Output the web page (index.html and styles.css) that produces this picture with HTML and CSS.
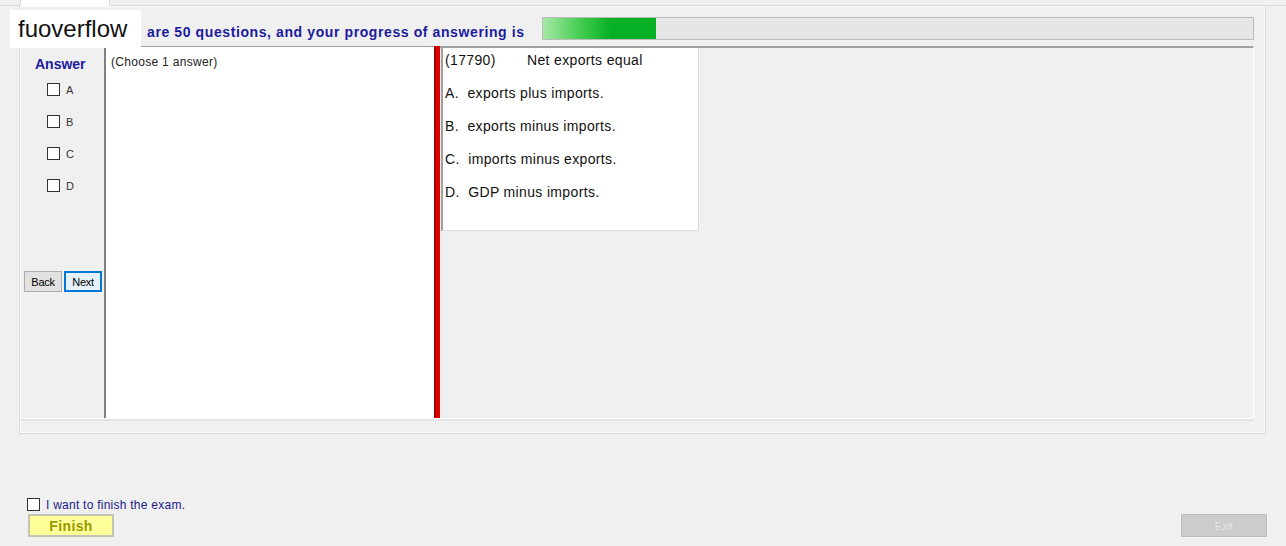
FILE: index.html
```html
<!DOCTYPE html>
<html lang="en">
<head>
    <meta charset="UTF-8">
    <meta name="viewport" content="width=device-width, initial-scale=1.0">
    <title>Exam</title>
    <link rel="stylesheet" href="styles.css">
</head>
<body>
    <div class="tabstrip">
        <div class="tab"></div>
    </div>
    <div class="panel">
        <div class="header">
            <div class="title">are 50 questions, and your progress of answering is</div>
            <div class="progress">
                <div class="progress-fill" style="width: 113px"></div>
            </div>
        </div>
        <div class="main">
            <div class="answer-col">
                <div class="answer-title">Answer</div>
                <div class="options">
                    <div class="option"><span class="box"></span><span>A</span></div>
                    <div class="option"><span class="box"></span><span>B</span></div>
                    <div class="option"><span class="box"></span><span>C</span></div>
                    <div class="option"><span class="box"></span><span>D</span></div>
                </div>
                <div class="nav">
                    <button class="nav-btn">Back</button>
                    <button class="nav-btn focused">Next</button>
                </div>
            </div>
            <div class="text-panel">(Choose 1 answer)</div>
            <div class="splitter"></div>
            <div class="question-area">
                <div class="question">
                    <p><span class="qid">(17790)</span>Net exports equal</p>
                    <p>A.&nbsp; exports plus imports.</p>
                    <p>B.&nbsp; exports minus imports.</p>
                    <p>C.&nbsp; imports minus exports.</p>
                    <p>D.&nbsp; GDP minus imports.</p>
                </div>
            </div>
        </div>
    </div>
    <div class="footer">
        <div class="finish-check"><span class="box"></span><span class="finish-label">I want to finish the exam.</span></div>
        <div class="buttons">
            <button class="finish-btn">Finish</button>
            <button class="exit-btn">Exit</button>
        </div>
    </div>
    <div class="watermark">fuoverflow</div>
</body>
</html>
```

FILE: styles.css
```css
body {
    font-family: "Liberation Sans", Arial, sans-serif;
    background-color: #f0f0f0;
    margin: 0;
    padding: 0;
    width: 1286px;
    height: 546px;
    overflow: hidden;
    position: relative;
}

.tabstrip {
    height: 5px;
    padding-left: 20px;
    border-bottom: 1px solid #dcdcdc;
}

.tab {
    width: 90px;
    height: 6px;
    background-color: #fff;
    border: 1px solid #d9d9d9;
    border-top: none;
    border-bottom: none;
    box-sizing: border-box;
}

.panel {
    margin-left: 19px;
    width: 1247px;
    height: 428px;
    box-sizing: border-box;
    border: 1px solid #dadada;
    border-top: none;
    box-shadow: inset 0 0 0 1px #fafafa;
    padding: 0 11px 0 2px;
}

.header {
    display: flex;
    height: 39px;
    box-sizing: border-box;
    padding-top: 11px;
}

.title {
    flex: 1;
    padding: 7px 0 0 125px;
    font-size: 14px;
    font-weight: bold;
    line-height: 16px;
    letter-spacing: 0.6px;
    color: #1b1b9e;
    white-space: nowrap;
}

.progress {
    width: 712px;
    height: 23px;
    box-sizing: border-box;
    background-color: #e6e6e6;
    border: 1px solid #bcbcbc;
}

.progress-fill {
    height: 100%;
    background: linear-gradient(to right, #a4e8a6 0, #3fcb4c 35%, #06b025 60%, #06b025 100%);
}

.main {
    display: flex;
    height: 373px;
    border-bottom: 1px solid #fff;
    box-shadow: 0 2px 0 #e3e3e3;
}

.answer-col {
    width: 82px;
    padding-top: 11px;
    box-sizing: border-box;
}

.answer-title {
    padding-left: 13px;
    font-size: 14px;
    font-weight: bold;
    line-height: 16px;
    color: #1b1b9e;
}

.options {
    margin-top: 11px;
    padding-left: 25px;
    display: flex;
    flex-direction: column;
    gap: 19px;
}

.option {
    display: flex;
    align-items: center;
    gap: 6px;
    height: 13px;
    font-size: 11px;
    color: #333;
}

.box {
    display: inline-block;
    width: 13px;
    height: 13px;
    box-sizing: border-box;
    border: 1px solid #333;
    background-color: #fff;
}

.nav {
    margin-top: 79px;
    padding-left: 2px;
    display: flex;
    gap: 2px;
}

.nav-btn {
    width: 38px;
    height: 21px;
    padding: 0;
    font-family: "Liberation Sans", Arial, sans-serif;
    font-size: 11px;
    color: #000;
    background-color: #e1e1e1;
    border: 1px solid #adadad;
    letter-spacing: -0.3px;
}

.nav-btn.focused {
    background-color: #e5f1fb;
    border: 2px solid #0078d7;
}

.text-panel {
    width: 330px;
    box-sizing: border-box;
    margin-top: 1px;
    background-color: #fff;
    border-top: 1px solid #a0a0a0;
    border-left: 2px solid #808080;
    padding: 7px 0 0 5px;
    font-size: 12px;
    line-height: 16px;
    letter-spacing: 0.3px;
    color: #222;
}

.splitter {
    width: 6px;
    margin-top: 1px;
    box-sizing: border-box;
    background-color: #dd0000;
    border-left: 2px solid #a40000;
}

.question-area {
    flex: 1;
    margin-top: 1px;
    border-top: 2px solid #a0a0a0;
    border-right: 1px solid #fff;
    padding-left: 1px;
}

.question {
    width: 258px;
    box-sizing: border-box;
    background-color: #fff;
    border-left: 2px solid #a0a0a0;
    border-right: 1px solid #dcdcdc;
    border-bottom: 1px solid #dcdcdc;
    padding: 1px 0 27px 2px;
    font-size: 14px;
    letter-spacing: 0.35px;
    color: #111;
}

.question p {
    margin: 0 0 11px;
    line-height: 22px;
}

.question p:last-child {
    margin-bottom: 0;
}

.qid {
    display: inline-block;
    width: 82px;
}

.footer {
    padding: 63px 0 0 27px;
}

.finish-check {
    display: flex;
    align-items: center;
    gap: 6px;
    height: 14px;
    font-size: 12px;
    color: #1a1a8a;
    letter-spacing: 0.25px;
}

.finish-label {
    padding-top: 2px;
}

.buttons {
    margin-top: 3px;
    display: flex;
    justify-content: space-between;
    width: 1240px;
}

.finish-btn {
    margin-left: 1px;
    width: 86px;
    height: 23px;
    padding: 0;
    background-color: #ffff99;
    border: 2px solid #c4c4b4;
    font-family: "Liberation Sans", Arial, sans-serif;
    font-size: 14px;
    font-weight: bold;
    letter-spacing: 0.4px;
    color: #999900;
}

.exit-btn {
    width: 86px;
    height: 23px;
    padding: 0;
    background-color: #cccccc;
    border: 1px solid #bdbdbd;
    font-family: "Liberation Sans", Arial, sans-serif;
    font-size: 11px;
    color: #e6e6e6;
}

.watermark {
    position: absolute;
    left: 10px;
    top: 10px;
    width: 131px;
    height: 38px;
    box-sizing: border-box;
    padding-left: 8px;
    background-color: #fff;
    font-size: 24px;
    line-height: 38px;
    color: #111;
}
```
